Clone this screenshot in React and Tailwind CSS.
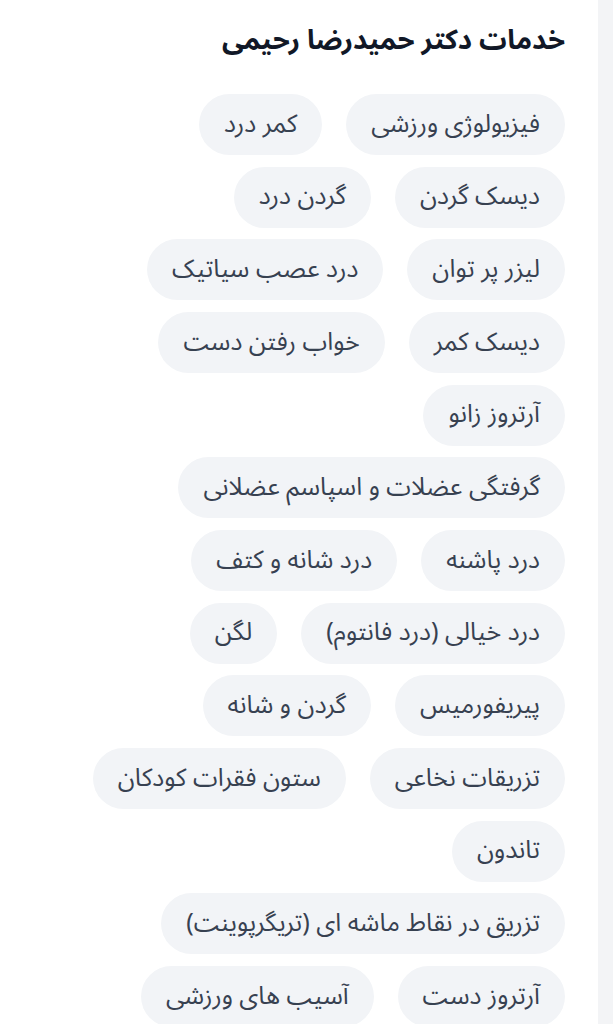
import React from 'react'

const rows = [
  ['فیزیولوژی ورزشی', 'کمر درد'],
  ['دیسک گردن', 'گردن درد'],
  ['لیزر پر توان', 'درد عصب سیاتیک'],
  ['دیسک کمر', 'خواب رفتن دست'],
  ['آرتروز زانو'],
  ['گرفتگی عضلات و اسپاسم عضلانی'],
  ['درد پاشنه', 'درد شانه و کتف'],
  ['درد خیالی (درد فانتوم)', 'لگن'],
  ['پیریفورمیس', 'گردن و شانه'],
  ['تزریقات نخاعی', 'ستون فقرات کودکان'],
  ['تاندون'],
  ['تزریق در نقاط ماشه ای (تریگرپوینت)'],
  ['آرتروز دست', 'آسیب های ورزشی'],
]

const font = { fontFamily: '"Noto Sans Arabic", "DejaVu Sans", sans-serif' }

const Pill = ({ label }) => (
  <span className="h-[61px] px-[25px] rounded-full bg-[#f2f4f7] text-[#374151] text-[25px] flex items-center whitespace-nowrap">
    {label}
  </span>
)

const App = () => {
  return (
    <div className="flex min-h-screen bg-white" style={font}>
      <div dir="rtl" className="flex-1 pr-[33px] pl-2 pt-[20px] pb-4">
        <h2 className="text-[27.5px] leading-[40px] font-bold text-[#111827]">
          خدمات دکتر حمیدرضا رحیمی
        </h2>
        <div className="mt-[34px] flex flex-col gap-[11.67px]">
          {rows.map((row, i) => (
            <div key={i} className="flex gap-6">
              {row.map((label) => (
                <Pill key={label} label={label} />
              ))}
            </div>
          ))}
        </div>
      </div>
      <div className="w-[15px] bg-[#f3f4f6]" />
    </div>
  )
}

export default App
